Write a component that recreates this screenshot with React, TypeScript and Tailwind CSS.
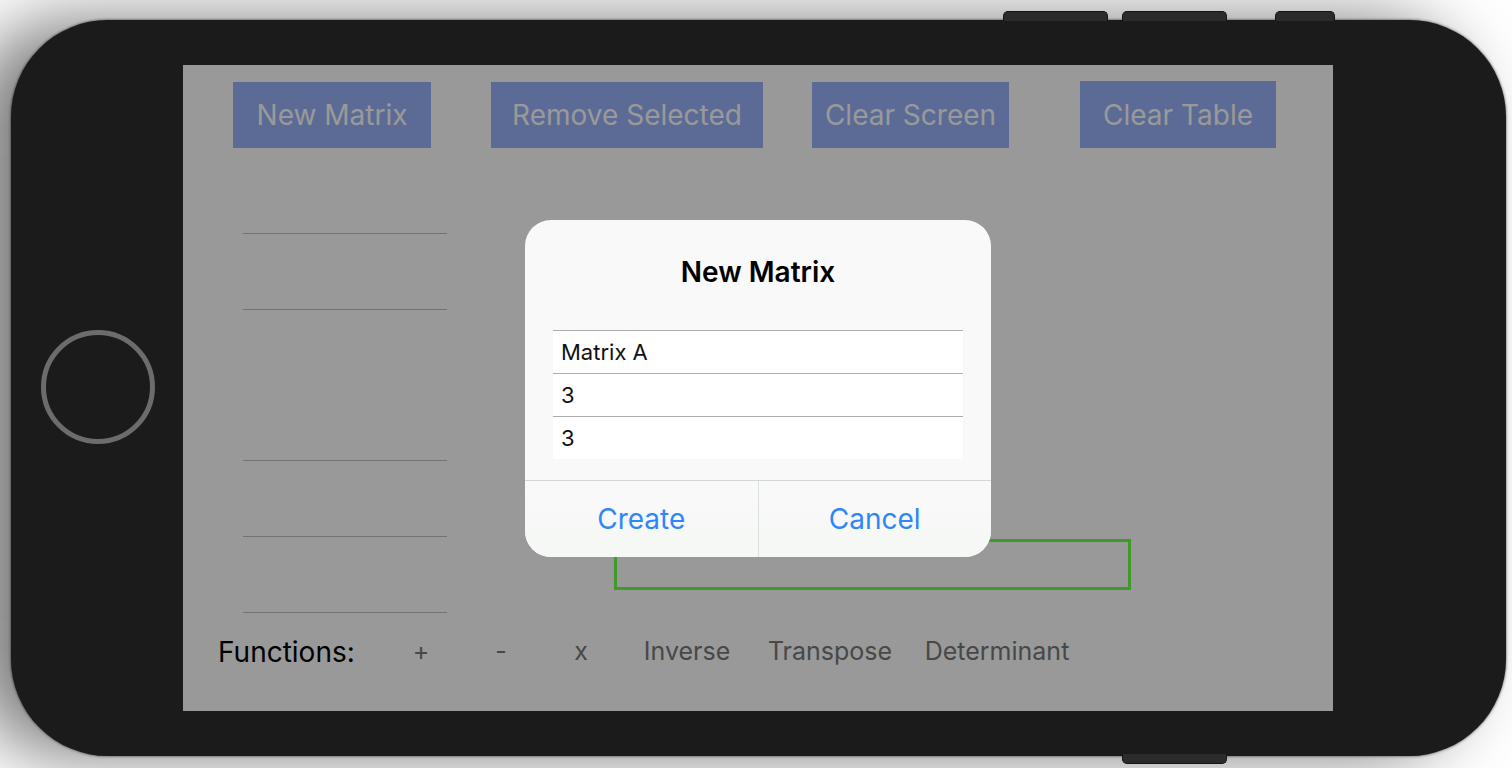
import { useState } from "react";

const toolbar = [
  { label: "New Matrix", box: "h-[66px] w-[198px]" },
  { label: "Remove Selected", box: "ml-[60px] h-[66px] w-[272px]" },
  { label: "Clear Screen", box: "ml-[49px] h-[66px] w-[197px]" },
  { label: "Clear Table", box: "ml-[71px] h-[67px] w-[196px]" },
];

const rows = ["h-[76px]", "h-[76px]", "h-[151px]", "h-[76px]", "h-[76px]"];

const functions = [
  { label: "+", name: "Add", width: "w-20" },
  { label: "-", name: "Subtract", width: "w-20" },
  { label: "x", name: "Multiply", width: "w-20" },
  { label: "Inverse", name: "Inverse", width: "w-[132px]" },
  { label: "Transpose", name: "Transpose", width: "w-[154px]" },
  { label: "Determinant", name: "Determinant", width: "w-[180px]" },
];

function SideButtons() {
  return (
    <>
      <span className="absolute -top-[9px] right-[398px] h-[10px] w-[105px] rounded-t-[5px] border border-b-0 border-[#151515] bg-[#2b2b2b]" />
      <span className="absolute -top-[9px] right-[279px] h-[10px] w-[105px] rounded-t-[5px] border border-b-0 border-[#151515] bg-[#2b2b2b]" />
      <span className="absolute -top-[9px] right-[171px] h-[10px] w-[60px] rounded-t-[5px] border border-b-0 border-[#151515] bg-[#2b2b2b]" />
      <span className="absolute right-[279px] -bottom-2 h-[10px] w-[105px] rounded-b-[5px] border border-t-0 border-[#151515] bg-[#2b2b2b]" />
    </>
  );
}

function NewMatrixDialog() {
  const [name, setName] = useState("Matrix A");
  const [rowCount, setRowCount] = useState("3");
  const [columnCount, setColumnCount] = useState("3");
  const fields = [
    { label: "Name", value: name, set: setName },
    { label: "Rows", value: rowCount, set: setRowCount },
    { label: "Columns", value: columnCount, set: setColumnCount },
  ];

  return (
    <form
      role="dialog"
      aria-labelledby="dialog-title"
      onSubmit={(event) => event.preventDefault()}
      className="w-[466px] overflow-hidden rounded-[26px] bg-[#f9f9f9]"
    >
      <h2 id="dialog-title" className="pt-9 pb-[42px] text-center text-[28px] leading-8 font-semibold text-black">
        New Matrix
      </h2>
      <div className="px-7 pb-[21px]">
        {fields.map((field) => (
          <input
            key={field.label}
            aria-label={field.label}
            value={field.value}
            onChange={(event) => field.set(event.target.value)}
            className="block h-[43px] w-full border-t border-[#acacac] bg-white px-2 text-[22px] text-[#111] outline-none"
          />
        ))}
      </div>
      <div className="flex border-t border-[#d3d6d8] bg-linear-to-b from-[#f9f9f9] to-[#f5f8f5] text-[28px] text-[#2f86fb]">
        <button type="submit" className="h-[76px] flex-1 border-r border-[#dbe1df]">
          Create
        </button>
        <button type="button" className="h-[76px] flex-1">
          Cancel
        </button>
      </div>
    </form>
  );
}

export default function App() {
  return (
    <div className="flex min-h-screen overflow-hidden bg-white pt-5 pr-[6px] pb-3 pl-[11px] font-['Inter','Liberation_Sans',sans-serif]">
      <div className="relative flex flex-1 rounded-[97px] bg-[#1b1b1b] py-[45px] pr-[173px] shadow-[0_0_3px_rgba(0,0,0,0.7),-40px_0_70px_rgba(0,0,0,0.52)]">
        <SideButtons />
        <div className="flex w-[172px] shrink-0 items-center justify-center pb-0.5 pl-0.5">
          <button aria-label="Home" className="size-[114px] rounded-full border-[5px] border-[#6c6c6c]" />
        </div>

        <main className="relative flex flex-1 flex-col bg-white">
          <header className="flex items-end pt-4 pl-[50px]">
            {toolbar.map((item) => (
              <button key={item.label} className={`${item.box} bg-[#99b1fa] text-[28px] whitespace-nowrap text-white`}>
                {item.label}
              </button>
            ))}
          </header>

          <section className="flex flex-1 pt-[10px] pl-[60px]">
            <ul aria-label="Matrices" className="w-[204px]">
              {rows.map((height, index) => (
                <li key={index} className={`${height} border-b border-[#c0c0c0]`} />
              ))}
            </ul>
            <div className="flex flex-1 items-end pb-[23px] pl-[167px]">
              <div className="h-[51px] w-[517px] border-[3px] border-[#6dff45]" />
            </div>
          </section>

          <footer className="flex items-center pb-5 pl-[35px]">
            <span className="w-[163px] text-[28px] text-black">Functions:</span>
            {functions.map((item) => (
              <button key={item.name} aria-label={item.name} className={`${item.width} h-[78px] text-[25px] text-[#787878]`}>
                {item.label}
              </button>
            ))}
          </footer>

          <div className="absolute inset-0 flex items-center justify-center bg-black/40">
            <NewMatrixDialog />
          </div>
        </main>
      </div>
    </div>
  );
}
